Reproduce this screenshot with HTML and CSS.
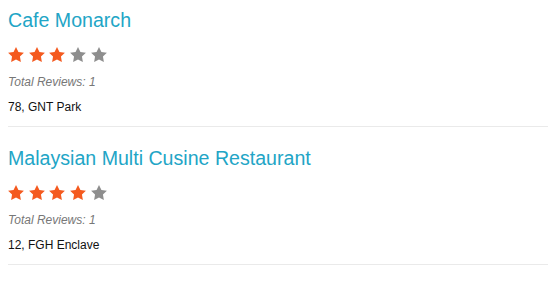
FILE: index.html
```html
<!DOCTYPE html>
<html lang="en">
<head>
  <meta charset="UTF-8" />
  <title>Restaurants</title>
  <link rel="stylesheet" href="styles.css">
</head>
<body>
  <ul class="list">
    <li class="place">
      <h2 class="name">Cafe Monarch</h2>
      <div class="stars">
        <svg class="star on" viewBox="2 2 20 19"><polygon points="12,2 15.09,8.26 22,9.27 17,14.14 18.18,21.02 12,17.77 5.82,21.02 7,14.14 2,9.27 8.91,8.26"/></svg>
        <svg class="star on" viewBox="2 2 20 19"><polygon points="12,2 15.09,8.26 22,9.27 17,14.14 18.18,21.02 12,17.77 5.82,21.02 7,14.14 2,9.27 8.91,8.26"/></svg>
        <svg class="star on" viewBox="2 2 20 19"><polygon points="12,2 15.09,8.26 22,9.27 17,14.14 18.18,21.02 12,17.77 5.82,21.02 7,14.14 2,9.27 8.91,8.26"/></svg>
        <svg class="star" viewBox="2 2 20 19"><polygon points="12,2 15.09,8.26 22,9.27 17,14.14 18.18,21.02 12,17.77 5.82,21.02 7,14.14 2,9.27 8.91,8.26"/></svg>
        <svg class="star" viewBox="2 2 20 19"><polygon points="12,2 15.09,8.26 22,9.27 17,14.14 18.18,21.02 12,17.77 5.82,21.02 7,14.14 2,9.27 8.91,8.26"/></svg>
      </div>
      <p class="reviews">Total Reviews: 1</p>
      <p class="address">78, GNT Park</p>
    </li>
    <li class="place">
      <h2 class="name">Malaysian Multi Cusine Restaurant</h2>
      <div class="stars">
        <svg class="star on" viewBox="2 2 20 19"><polygon points="12,2 15.09,8.26 22,9.27 17,14.14 18.18,21.02 12,17.77 5.82,21.02 7,14.14 2,9.27 8.91,8.26"/></svg>
        <svg class="star on" viewBox="2 2 20 19"><polygon points="12,2 15.09,8.26 22,9.27 17,14.14 18.18,21.02 12,17.77 5.82,21.02 7,14.14 2,9.27 8.91,8.26"/></svg>
        <svg class="star on" viewBox="2 2 20 19"><polygon points="12,2 15.09,8.26 22,9.27 17,14.14 18.18,21.02 12,17.77 5.82,21.02 7,14.14 2,9.27 8.91,8.26"/></svg>
        <svg class="star on" viewBox="2 2 20 19"><polygon points="12,2 15.09,8.26 22,9.27 17,14.14 18.18,21.02 12,17.77 5.82,21.02 7,14.14 2,9.27 8.91,8.26"/></svg>
        <svg class="star" viewBox="2 2 20 19"><polygon points="12,2 15.09,8.26 22,9.27 17,14.14 18.18,21.02 12,17.77 5.82,21.02 7,14.14 2,9.27 8.91,8.26"/></svg>
      </div>
      <p class="reviews">Total Reviews: 1</p>
      <p class="address">12, FGH Enclave</p>
    </li>
  </ul>
</body>
</html>
```

FILE: styles.css
```css
body { margin: 0; padding: 0 2px 0 8px; font-family: "Liberation Sans", Arial, sans-serif; background: #fff; color: #111; }
.list { list-style: none; margin: 0; padding: 0; }
.place { border-bottom: 1px solid #eaeaea; padding: 20px 0 12px; }
.place:first-child { padding-top: 9px; }
.name { margin: 0; font-size: 19.6px; font-weight: normal; color: #22a5c6; line-height: 23px; }
.stars { display: flex; gap: 4.7px; margin-top: 15px; height: 15px; }
.star { width: 16px; height: 15px; fill: #8e8e8e; }
.star.on { fill: #f45a1f; }
.reviews { margin: 13px 0 0; font-size: 12px; font-style: italic; color: #777; line-height: 14px; }
.address { margin: 11px 0 0; font-size: 12px; line-height: 14px; color: #111; }
```
